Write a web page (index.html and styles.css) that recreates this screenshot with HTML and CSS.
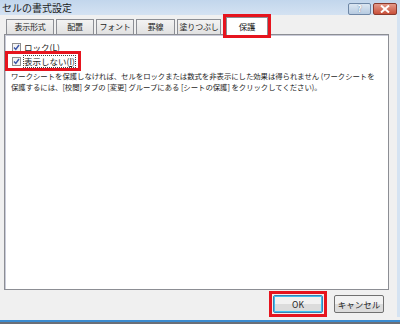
FILE: index.html
```html
<!DOCTYPE html>
<html lang="ja">
<head>
  <meta charset="UTF-8">
  <title>セルの書式設定</title>
  <link rel="stylesheet" href="styles.css">
</head>
<body>
  <div class="window">
    <div class="titlebar">
      <span class="title">セルの書式設定</span>
      <span class="cap-btn help">?</span>
      <span class="cap-btn close">
        <svg width="10" height="8" viewBox="0 0 10 8"><path d="M1 0.5 L9 7.5 M9 0.5 L1 7.5" stroke="#fff" stroke-width="2"/></svg>
      </span>
    </div>

    <div class="client">
      <div class="tabs">
        <div class="tab w1">表示形式</div>
        <div class="tab w2">配置</div>
        <div class="tab w3">フォント</div>
        <div class="tab w4">罫線</div>
        <div class="tab w5">塗りつぶし</div>
        <div class="tab active mark">保護</div>
      </div>

      <div class="panel">
        <label class="check">
          <svg class="box" width="9" height="9" viewBox="0 0 9 9"><rect x="0.5" y="0.5" width="8" height="8" fill="#f4f4f4" stroke="#8f8f8f"/><path d="M2 4.5 L3.8 6.5 L7 2" fill="none" stroke="#3a55a8" stroke-width="1.4"/></svg>
          <span>ロック(<u>L</u>)</span>
        </label>
        <label class="check mark">
          <svg class="box" width="9" height="9" viewBox="0 0 9 9"><rect x="0.5" y="0.5" width="8" height="8" fill="#f4f4f4" stroke="#8f8f8f"/><path d="M2 4.5 L3.8 6.5 L7 2" fill="none" stroke="#3a55a8" stroke-width="1.4"/></svg>
          <span class="dotted">表示しない(<u>I</u>)</span>
        </label>
        <p class="note">ワークシートを保護しなければ、セルをロックまたは数式を非表示にした効果は得られません (ワークシートを<br>保護するには、[校閲] タブの [変更] グループにある [シートの保護] をクリックしてください)。</p>
      </div>

      <div class="buttons">
        <span class="btn-mark"><button class="btn default">OK</button></span>
        <button class="btn">キャンセル</button>
      </div>
    </div>
    <div class="taskbar"></div>
  </div>
</body>
</html>
```

FILE: styles.css
```css
* {
  box-sizing: border-box;
}
body {
  margin: 0;
  font-family: "Noto Sans CJK JP", "DejaVu Sans", sans-serif;
  color: #1e1e1e;
}
.window {
  width: 400px;
  height: 324px;
  display: flex;
  flex-direction: column;
  background: #f0f0f0;
  overflow: hidden;
}
.titlebar {
  height: 18px;
  display: flex;
  align-items: flex-start;
  padding: 2px 3px 0 2px;
  background: linear-gradient(to bottom, #c2d6ec, #d4e2f2);
  font-size: 10px;
}
.title {
  flex: 1;
  color: #1b1b1b;
  line-height: 12px;
}
.cap-btn {
  height: 12px;
  display: flex;
  align-items: center;
  justify-content: center;
  border: 1px solid #6e87a6;
  border-radius: 2px;
  margin-top: 1px;
}
.help {
  width: 23px;
  margin-right: 2px;
  background: linear-gradient(to bottom, #dbe6f2, #b7cbe1);
  color: #fff;
  font-size: 9px;
  line-height: 10px;
  font-weight: bold;
  text-shadow: 0 0 1px #3c5a80;
}
.close {
  width: 24px;
  border-color: #8a3a2e;
  background: linear-gradient(to bottom, #e49a8a, #c9503a);
}
.client {
  flex: 1;
  display: flex;
  flex-direction: column;
  padding: 4px 8px 0 4px;
  border-right: 3px solid #d5e3f2;
}
.tabs {
  display: flex;
  align-items: flex-end;
  height: 15px;
  padding-left: 2px;
  gap: 2px;
}
.tab {
  height: 15px;
  font-size: 8px;
  line-height: 14px;
  letter-spacing: -0.2px;
  white-space: nowrap;
  text-align: center;
  border: 1px solid #8c8e94;
  border-bottom: none;
  background: linear-gradient(to bottom, #f3f3f3, #e1e1e1);
  color: #222;
}
.w1 { width: 48px; }
.w2 { width: 38px; }
.w3 { width: 38px; }
.w4 { width: 39px; }
.w5 { width: 44px; }
.tab.active {
  position: relative;
  width: 42px;
  height: 18px;
  margin-left: 3px;
  background: #fff;
  font-size: 8.5px;
  line-height: 17px;
  z-index: 1;
  margin-bottom: -1px;
}
.panel {
  height: 256px;
  background: #fff;
  border: 1px solid #8c8e94;
  box-shadow: inset 1px 1px 0 #c9cbd8;
  padding: 5px 6px;
}
.check {
  display: flex;
  align-items: center;
  gap: 3px;
  height: 14px;
  font-size: 8.5px;
  padding-left: 1px;
}
.check u {
  text-decoration: underline;
}
.dotted {
  outline: 1px dotted #444;
  line-height: 11px;
}
.note {
  margin: 2px 0 0;
  font-size: 7.4px;
  line-height: 11px;
  white-space: nowrap;
  letter-spacing: -0.05px;
}
.buttons {
  display: flex;
  justify-content: flex-end;
  align-items: center;
  gap: 7px;
  padding: 1px 5px 0 0;
}
.btn-mark {
  display: flex;
  padding: 1px;
  border: 3px solid #e6141e;
}
.btn {
  height: 18px;
  width: 50px;
  padding: 0;
  font-family: inherit;
  font-size: 8.5px;
  color: #1e1e1e;
  border: 1px solid #707070;
  border-radius: 2px;
  background: linear-gradient(to bottom, #f2f2f2 50%, #dcdcdc 50%);
}
.btn.default {
  border-color: #3c7fb1;
  box-shadow: inset 0 0 0 1px #3fc0ef;
}
.btn + .btn {
  width: 47px;
}
.mark {
  outline: 3px solid #e6141e;
}
.check.mark {
  width: 70px;
  margin-left: -3px;
  padding-left: 4px;
}
.taskbar {
  height: 4px;
  margin-top: 3px;
  border-top: 2px solid #3b8bd0;
  background: #6a6f78;
}
```
